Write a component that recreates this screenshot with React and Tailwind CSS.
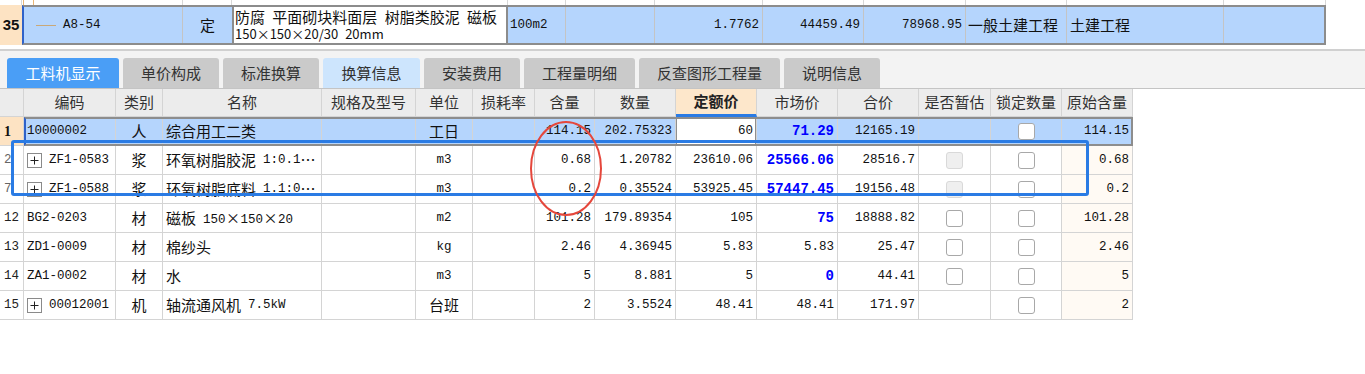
import React from "react";

const MONO = "[font-family:'Liberation_Mono',monospace] text-[12.5px]";
const MONO_B = "[font-family:'Liberation_Mono',monospace] text-[14px] font-bold text-[#0000ff]";

// column widths and alignment of the lower grid
const W = [
  "w-[24px]", "w-[92px]", "w-[47px]", "w-[159px]", "w-[94px]", "w-[57px]", "w-[62px]", "w-[60px]",
  "w-[81px]", "w-[81px]", "w-[81px]", "w-[81px]", "w-[72px]", "w-[71px]", "w-[71px]",
];
const AL = [
  "justify-start pl-[4px]", "justify-start pl-[3px]", "justify-center", "justify-start pl-[3px]",
  "justify-center", "justify-center", "justify-center", "justify-end pr-[3px]",
  "justify-end pr-[3px]", "justify-end pr-[3px]", "justify-end pr-[3px]", "justify-end pr-[3px]",
  "justify-center", "justify-center", "justify-end pr-[3px]",
];

const HEADERS = ["", "编码", "类别", "名称", "规格及型号", "单位", "损耗率", "含量", "数量", "定额价", "市场价", "合价", "是否暂估", "锁定数量", "原始含量"];

const TABS = [
  { label: "工料机显示", w: "w-[112px]", cls: "bg-[#4a9ef6] text-white" },
  { label: "单价构成", w: "w-[96px]", cls: "bg-[#cacaca] text-[#333]" },
  { label: "标准换算", w: "w-[96px]", cls: "bg-[#cacaca] text-[#333]" },
  { label: "换算信息", w: "w-[97px]", cls: "bg-[#cde5fd] text-[#333]" },
  { label: "安装费用", w: "w-[96px]", cls: "bg-[#cacaca] text-[#333]" },
  { label: "工程量明细", w: "w-[111px]", cls: "bg-[#cacaca] text-[#333]" },
  { label: "反查图形工程量", w: "w-[141px]", cls: "bg-[#cacaca] text-[#333]" },
  { label: "说明信息", w: "w-[96px]", cls: "bg-[#cacaca] text-[#333]" },
];

const Times = () => (
  <span className="inline-block w-[15px] text-center text-[14px] [font-family:'Noto_Sans_CJK_SC',sans-serif]">×</span>
);
const Tail = ({ children }) => <span className={`ml-[7px] ${MONO}`}>{children}</span>;

const ROWS = [
  {
    no: "2", plus: true, code: "ZF1-0583", type: "浆",
    name: <><span>环氧树脂胶泥</span><Tail>1:0.1</Tail><span>…</span></>,
    unit: <span className={MONO}>m3</span>, han: "0.68", shu: "1.20782", ding: "23610.06",
    shi: "25566.06", blue: true, he: "28516.7", gu: "dis", yuan: "0.68", noCls: "text-[#666]",
  },
  {
    no: "7", plus: true, code: "ZF1-0588", type: "浆",
    name: <><span>环氧树脂底料</span><Tail>1.1:0</Tail><span>…</span></>,
    unit: <span className={MONO}>m3</span>, han: "0.2", shu: "0.35524", ding: "53925.45",
    shi: "57447.45", blue: true, he: "19156.48", gu: "dis", yuan: "0.2", noCls: "text-[#666]",
  },
  {
    no: "12", code: "BG2-0203", type: "材",
    name: <><span>磁板</span><Tail>150<Times />150<Times />20</Tail></>,
    unit: <span className={MONO}>m2</span>, han: "101.28", shu: "179.89354", ding: "105",
    shi: "75", blue: true, he: "18888.82", gu: "on", yuan: "101.28",
  },
  {
    no: "13", code: "ZD1-0009", type: "材", name: <span>棉纱头</span>,
    unit: <span className={MONO}>kg</span>, han: "2.46", shu: "4.36945", ding: "5.83",
    shi: "5.83", he: "25.47", gu: "on", yuan: "2.46",
  },
  {
    no: "14", code: "ZA1-0002", type: "材", name: <span>水</span>,
    unit: <span className={MONO}>m3</span>, han: "5", shu: "8.881", ding: "5",
    shi: "0", blue: true, he: "44.41", gu: "on", yuan: "5",
  },
  {
    no: "15", plus: true, code: "00012001", type: "机",
    name: <><span>轴流通风机</span><Tail>7.5kW</Tail></>,
    unit: <span>台班</span>, han: "2", shu: "3.5524", ding: "48.41",
    shi: "48.41", he: "171.97", gu: null, yuan: "2",
  },
];

function Cell({ i, className = "", children }) {
  return (
    <div
      className={`${W[i]} ${AL[i]} h-[29px] shrink-0 flex items-center border-r border-b border-[#d4d4d4] overflow-hidden whitespace-nowrap ${className}`}
    >
      {children}
    </div>
  );
}

function Plus() {
  return (
    <svg width="15" height="15" viewBox="0 0 15 15" className="mr-[7px] shrink-0">
      <rect x="0.5" y="0.5" width="14" height="14" fill="white" stroke="#8a8a8a" />
      <path d="M3.5 7.5h8M7.5 3.5v8" stroke="#222" strokeWidth="1" />
    </svg>
  );
}

function Check({ disabled }) {
  return (
    <span
      className={`block w-[17px] h-[17px] rounded-[3px] border ${
        disabled ? "bg-[#efefef] border-[#d9d9d9]" : "bg-white border-[#a8a8a8]"
      }`}
    />
  );
}

const Num = ({ children }) => <span className={MONO}>{children}</span>;

function TopRow() {
  const strip = ["w-[22px]", "w-[161px]", "w-[49px]", "w-[276px]", "w-[58px]", "w-[89px]", "w-[108px]", "w-[101px]", "w-[102px]", "w-[101px]", "w-[157px]", "w-[102px]"];
  const sep = "border-r border-[#c4c4c4]";
  return (
    <div>
      <div className="flex h-[5px]">
        {strip.map((w, k) => (
          <div key={k} className={`${w} h-full border-r border-[#d8d8d8] flex`}>
            {k === 1 && (
              <>
                <div className="ml-[1px] w-px h-full bg-[#eab778]" />
                <div className="ml-[9px] w-px h-full bg-[#eab778]" />
              </>
            )}
          </div>
        ))}
      </div>
      <div className="flex h-[40px]">
        <div className="w-[22px] bg-[#fde3c3] flex items-center justify-center font-bold text-[15px] [font-family:'Liberation_Sans',sans-serif]">
          35
        </div>
        <div className="w-[1304px] flex border-2 border-[#8c8c8c] border-l-[#2f62c9] bg-[#b5d5fd]">
          <div className={`w-[159px] flex items-center ${sep}`}>
            <span className="ml-[12px] w-[20px] h-px bg-[#c9a878]" />
            <span className={`ml-[7px] ${MONO}`}>A8-54</span>
          </div>
          <div className={`w-[49px] flex items-center justify-center`}>定</div>
          <div className="w-[276px] bg-white border-x-2 border-[#8c8c8c] flex flex-col justify-center pl-[1px] leading-[17px] whitespace-nowrap">
            <span className="text-[15px] [word-spacing:4px]">防腐 平面砌块料面层 树脂类胶泥 磁板</span>
            <span className="text-[13px] [word-spacing:4px]">150×150×20/30 20mm</span>
          </div>
          <div className={`w-[58px] flex items-center pl-[2px] ${sep}`}>
            <Num>100m2</Num>
          </div>
          <div className={`w-[89px] ${sep}`} />
          <div className={`w-[108px] flex items-center justify-end pr-[3px] ${sep}`}>
            <Num>1.7762</Num>
          </div>
          <div className={`w-[101px] flex items-center justify-end pr-[3px] ${sep}`}>
            <Num>44459.49</Num>
          </div>
          <div className={`w-[102px] flex items-center justify-end pr-[3px] ${sep}`}>
            <Num>78968.95</Num>
          </div>
          <div className={`w-[101px] flex items-center pl-[2px] ${sep}`}>一般土建工程</div>
          <div className={`w-[157px] flex items-center pl-[3px] ${sep}`}>土建工程</div>
          <div className="flex-1" />
        </div>
      </div>
      <div className="h-[4px]" />
    </div>
  );
}

function Tabs() {
  return (
    <div className="h-[39px] border-t-2 border-[#d0d0d0] bg-[#f3f3f3] flex items-end gap-1 pl-[7px]">
      {TABS.map((t) => (
        <div
          key={t.label}
          className={`${t.w} ${t.cls} h-[30px] rounded-t-[3px] flex items-center justify-center text-[15px]`}
        >
          {t.label}
        </div>
      ))}
    </div>
  );
}

function Header() {
  return (
    <div className="border-t border-[#c4c4c4]">
      <div className="flex w-[1133px]">
        {HEADERS.map((h, i) =>
          i === 9 ? (
            <div
              key={i}
              className={`${W[i]} h-[28px] shrink-0 flex items-center justify-center border-r border-b-[3px] border-r-[#d4d4d4] border-b-[#2a7be4] bg-[#fde7cb] font-bold text-[#222]`}
            >
              {h}
            </div>
          ) : (
            <div
              key={i}
              className={`${W[i]} h-[28px] shrink-0 flex items-center justify-center border-r border-b border-[#d4d4d4] bg-[#ececec] text-[#333]`}
            >
              {h}
            </div>
          )
        )}
      </div>
    </div>
  );
}

function SelectedRow() {
  const sel = "bg-[#b5d5fd] border-[#c3d6ee]";
  return (
    <div className="relative flex w-[1133px]">
      <Cell i={0} className="bg-[#fde3c3] font-bold">
        <span className="[font-family:'Liberation_Serif',serif] text-[14px]">1</span>
      </Cell>
      <Cell i={1} className={sel}><Num>10000002</Num></Cell>
      <Cell i={2} className={sel}>人</Cell>
      <Cell i={3} className={sel}>综合用工二类</Cell>
      <Cell i={4} className={sel} />
      <Cell i={5} className={sel}>工日</Cell>
      <Cell i={6} className={sel} />
      <Cell i={7} className={sel}><Num>114.15</Num></Cell>
      <Cell i={8} className={sel}><Num>202.75323</Num></Cell>
      <Cell i={9} className="bg-white shadow-[inset_0_0_0_1px_#8f8f8f]"><Num>60</Num></Cell>
      <Cell i={10} className={sel}><span className={MONO_B}>71.29</span></Cell>
      <Cell i={11} className={sel}><Num>12165.19</Num></Cell>
      <Cell i={12} className={sel} />
      <Cell i={13} className={sel}><Check /></Cell>
      <Cell i={14} className={sel}><Num>114.15</Num></Cell>
      <div className="pointer-events-none absolute left-[24px] top-0 right-0 bottom-0 border-2 border-[#8d8d8d] border-l-[#2f62c9]" />
    </div>
  );
}

function DataRow({ r }) {
  return (
    <div className="flex w-[1133px]">
      <Cell i={0} className={r.noCls || "text-[#222]"}><Num>{r.no}</Num></Cell>
      <Cell i={1}>
        {r.plus && <Plus />}
        <Num>{r.code}</Num>
      </Cell>
      <Cell i={2}>{r.type}</Cell>
      <Cell i={3}>{r.name}</Cell>
      <Cell i={4} />
      <Cell i={5}>{r.unit}</Cell>
      <Cell i={6} />
      <Cell i={7}><Num>{r.han}</Num></Cell>
      <Cell i={8}><Num>{r.shu}</Num></Cell>
      <Cell i={9}><Num>{r.ding}</Num></Cell>
      <Cell i={10}>{r.blue ? <span className={MONO_B}>{r.shi}</span> : <Num>{r.shi}</Num>}</Cell>
      <Cell i={11}><Num>{r.he}</Num></Cell>
      <Cell i={12}>{r.gu && <Check disabled={r.gu === "dis"} />}</Cell>
      <Cell i={13}><Check /></Cell>
      <Cell i={14} className="bg-[#fffaf4]"><Num>{r.yuan}</Num></Cell>
    </div>
  );
}

export default function App() {
  return (
    <div className="relative w-[1365px] h-[374px] overflow-hidden bg-white text-[15px] text-[#111] [font-family:'Noto_Sans_CJK_SC',sans-serif]">
      <TopRow />
      <Tabs />
      <Header />
      <SelectedRow />
      {ROWS.map((r) => (
        <DataRow key={r.no} r={r} />
      ))}

      {/* annotation marks drawn over the grid */}
      <div className="pointer-events-none absolute left-[11px] top-[140px] w-[1078px] h-[56px] border-[3px] border-[#2a7be4] rounded-[3px]" />
      <svg className="pointer-events-none absolute left-[528px] top-[119px]" width="78" height="100" viewBox="0 0 78 100">
        <ellipse cx="38" cy="49.5" rx="35" ry="46.5" fill="none" stroke="#e5473c" strokeWidth="2" />
      </svg>
    </div>
  );
}
